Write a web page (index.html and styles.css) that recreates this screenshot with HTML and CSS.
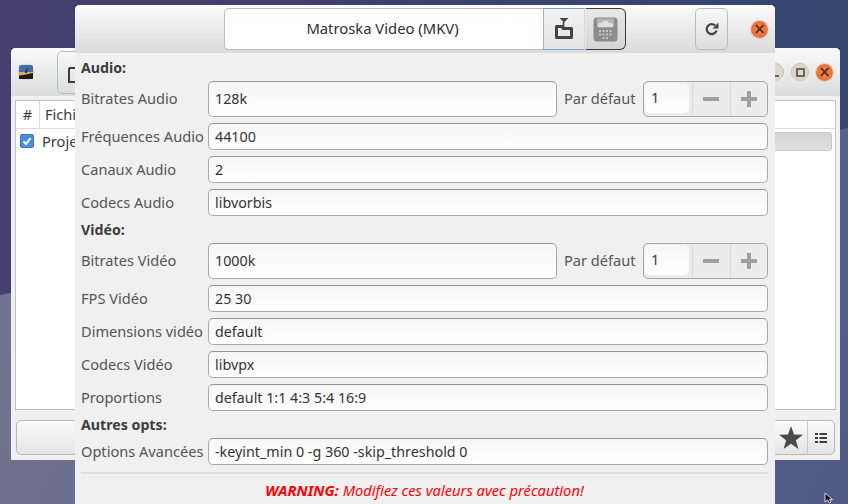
FILE: index.html
```html
<!DOCTYPE html>
<html lang="fr">
<head>
    <meta charset="UTF-8">
    <title>Matroska Video (MKV)</title>
    <link rel="stylesheet" href="styles.css">
</head>
<body>
    <div class="desktop">
        <!-- Window behind the settings dialog -->
        <div class="window back-window">
            <div class="back-header">
                <svg class="app-icon" width="18" height="18" viewBox="0 0 18 18">
                    <circle cx="9" cy="9" r="8.5" fill="#ddd8cf"/>
                    <rect x="2" y="2" width="14" height="14" rx="2" fill="#3f6fa8"/>
                    <rect x="2" y="9" width="14" height="3" fill="#e8a060"/>
                    <path d="M2 16 L2 13 L16 10 L16 16 Z" fill="#1b1b1b"/>
                    <path d="M8 10 L10 5 L11 5 L9.5 10 Z" fill="#222"/>
                </svg>
                <div class="back-tool">
                    <svg width="14" height="16" viewBox="0 0 14 16">
                        <path d="M1 1 H8 M1 1 V15 H12 V6 M11 1 V3" fill="none" stroke="#3c3c3c" stroke-width="2"/>
                    </svg>
                </div>
                <div class="back-controls">
                    <span class="wm-btn"><span class="wm-min"></span></span>
                    <span class="wm-btn"><span class="wm-max"></span></span>
                    <span class="wm-close">×</span>
                </div>
            </div>
            <div class="back-body">
                <div class="file-list">
                    <div class="list-head">
                        <span class="col-num">#</span>
                        <span class="col-name">Fichier</span>
                    </div>
                    <div class="list-row">
                        <span class="check">
                            <svg width="12" height="12" viewBox="0 0 12 12"><path d="M2.5 6.5 L5 9 L9.5 3" fill="none" stroke="#fff" stroke-width="2"/></svg>
                        </span>
                        <span>Projet</span>
                        <div class="progress"></div>
                    </div>
                </div>
                <div class="back-footer">
                    <div class="footer-main"></div>
                    <div class="footer-btn star">
                        <svg width="24" height="23" viewBox="0 0 24 23">
                            <path d="M12 0 L15 8.500 L24 8.800 L16.900 14.200 L19.400 23 L12 17.800 L4.600 23 L7.100 14.200 L0 8.800 L9 8.500 Z" fill="#4a4a4a"/>
                        </svg>
                    </div>
                    <div class="footer-btn">
                        <svg width="12" height="10" viewBox="0 0 12 10">
                            <path d="M0 0H3V2H0ZM4.500 0H12V2H4.500ZM0 4H3V6H0ZM4.500 4H12V6H4.500ZM0 8H3V10H0ZM4.500 8H12V10H4.500Z" fill="#3c3c3c"/>
                        </svg>
                    </div>
                </div>
            </div>
        </div>

        <!-- Settings dialog -->
        <div class="window dialog">
            <div class="dialog-header">
                <div class="format-group">
                    <div class="format-name">Matroska Video (MKV)</div>
                    <div class="format-btn btn-blue">
                        <svg width="20" height="24" viewBox="0 0 20 24">
                            <path d="M5.500 1H14.500L10 5.500Z" fill="#444"/>
                            <path d="M9.500 5V9" fill="none" stroke="#444" stroke-width="1.600"/>
                            <path d="M2.500 9.500H9V11.500H17.500V20.500H2.500Z" fill="none" stroke="#444" stroke-width="3" stroke-linejoin="round"/>
                        </svg>
                    </div>
                    <div class="format-btn btn-dark">
                        <svg width="25" height="25" viewBox="0 0 25 25">
                            <rect x="0.5" y="0.5" width="24" height="24" rx="3.5" fill="#8c8c8c"/>
                            <path d="M4 1.500 H21 V8 C21 10 19 11 17 10.500 H8 C6 11 4 10 4 8 Z" fill="#b5b5b5"/>
                            <path d="M5 10 C4 6 7 5 9 6 C10 2.500 15 2.500 16 6 C19 5 21 7 20 10 Z" fill="#e0e0e0"/>
                            <path d="M6 13H8V15H6ZM9.500 13H11.500V15H9.500ZM13 13H15V15H13ZM16.500 13H18.500V15H16.500ZM6 16.500H8V18.500H6ZM9.500 16.500H11.500V18.500H9.500ZM13 16.500H15V18.500H13ZM16.500 16.500H18.500V18.500H16.500ZM9.500 20H11.500V22H9.500ZM13 20H15V22H13Z" fill="#c4c4c4"/>
                        </svg>
                    </div>
                </div>
                <div class="refresh-btn">
                    <svg width="16" height="16" viewBox="0 0 16 16">
                        <path d="M12.500 9.500 A5 5 0 1 1 11 4.300" fill="none" stroke="#444" stroke-width="2.300"/>
                        <path d="M14.500 1.500 V7.500 H8.500 Z" fill="#444"/>
                    </svg>
                </div>
                <div class="dialog-close">×</div>
            </div>
            <div class="form">
                <div class="section-title title-first">Audio:</div>
                <div class="row row-tall">
                    <label class="field-label">Bitrates Audio</label>
                    <div class="entry entry-grow">128k</div>
                    <span class="default-label">Par défaut</span>
                    <div class="spin">
                        <div class="spin-value">1</div>
                        <div class="spin-btn">
                            <svg width="16" height="4" viewBox="0 0 16 4"><path d="M0 0H16V4H0Z" fill="#a0a0a0"/></svg>
                        </div>
                        <div class="spin-btn">
                            <svg width="16" height="16" viewBox="0 0 16 16"><path d="M6 0H10V6H16V10H10V16H6V10H0V6H6Z" fill="#a0a0a0"/></svg>
                        </div>
                    </div>
                </div>
                <div class="row">
                    <label class="field-label">Fréquences Audio</label>
                    <div class="entry">44100</div>
                </div>
                <div class="row">
                    <label class="field-label">Canaux Audio</label>
                    <div class="entry">2</div>
                </div>
                <div class="row">
                    <label class="field-label">Codecs Audio</label>
                    <div class="entry">libvorbis</div>
                </div>
                <div class="section-title">Vidéo:</div>
                <div class="row row-tall">
                    <label class="field-label">Bitrates Vidéo</label>
                    <div class="entry entry-grow">1000k</div>
                    <span class="default-label">Par défaut</span>
                    <div class="spin">
                        <div class="spin-value">1</div>
                        <div class="spin-btn">
                            <svg width="16" height="4" viewBox="0 0 16 4"><path d="M0 0H16V4H0Z" fill="#a0a0a0"/></svg>
                        </div>
                        <div class="spin-btn">
                            <svg width="16" height="16" viewBox="0 0 16 16"><path d="M6 0H10V6H16V10H10V16H6V10H0V6H6Z" fill="#a0a0a0"/></svg>
                        </div>
                    </div>
                </div>
                <div class="row">
                    <label class="field-label">FPS Vidéo</label>
                    <div class="entry">25 30</div>
                </div>
                <div class="row">
                    <label class="field-label">Dimensions vidéo</label>
                    <div class="entry">default</div>
                </div>
                <div class="row">
                    <label class="field-label">Codecs Vidéo</label>
                    <div class="entry">libvpx</div>
                </div>
                <div class="row">
                    <label class="field-label">Proportions</label>
                    <div class="entry">default 1:1 4:3 5:4 16:9</div>
                </div>
                <div class="section-title">Autres opts:</div>
                <div class="row">
                    <label class="field-label">Options Avancées</label>
                    <div class="entry">-keyint_min 0 -g 360 -skip_threshold 0</div>
                </div>
                <div class="separator"></div>
                <div class="warning"><b>WARNING:</b> Modifiez ces valeurs avec précaution!</div>
            </div>
        </div>

        <svg class="cursor" width="10" height="12" viewBox="0 0 10 12">
            <path d="M1 1 V10 L3.500 8 L5.500 11 L7 10 L5.500 7.500 H8.500 Z" fill="#111" stroke="#fff" stroke-width="0.800"/>
        </svg>
    </div>
</body>
</html>
```

FILE: styles.css
```css
html, body {
    margin: 0;
    padding: 0;
}
body {
    font-family: "Noto Sans", "Open Sans", sans-serif;
    font-size: 14.6px;
    color: #3c3c3c;
}
.desktop {
    position: relative;
    width: 848px;
    height: 504px;
    overflow: hidden;
    background: linear-gradient(90deg, #463e6e 0%, #3f4070 40%, #33476f 100%);
}
/* lighter lower part of the wallpaper */
.desktop::before {
    content: "";
    position: absolute;
    inset: 0;
    clip-path: polygon(0 295px, 848px 128px, 848px 504px, 0 504px);
    background: linear-gradient(120deg, #75778f 0%, #6a6c8e 40%, #505a85 100%);
}
.window {
    position: absolute;
    box-sizing: border-box;
    /* dark pixels show through the rounded header corners */
    background: linear-gradient(#111 0 6px, #f0f0f0 6px);
}

/* back window */
.back-window {
    left: 11px;
    top: 48px;
    width: 829px;
    height: 412px;
    display: flex;
    flex-direction: column;
}
.back-header {
    height: 48px;
    flex: none;
    display: flex;
    align-items: center;
    background: linear-gradient(#fafafa, #dcdcdc);
    border-radius: 4px 4px 0 0;
}
.app-icon {
    margin-left: 6px;
}
.back-tool {
    box-sizing: border-box;
    width: 60px;
    height: 43px;
    margin-left: 22px;
    padding: 15px 0 0 10px;
    border: 1px solid #b4bccb;
    border-radius: 5px;
}
.back-controls {
    margin-left: auto;
    margin-right: 7px;
    display: flex;
    gap: 7px;
    align-items: center;
}
.wm-btn {
    display: flex;
    align-items: center;
    justify-content: center;
    width: 18px;
    height: 18px;
    border-radius: 50%;
    background: #ddd8cf;
    border: 1px solid #c6c2ba;
    box-sizing: border-box;
}
.wm-min {
    width: 8px;
    height: 2px;
    background: #666;
    margin-top: 7px;
}
.wm-max {
    width: 5px;
    height: 5px;
    border: 2px solid #6e665a;
}
.wm-close, .dialog-close {
    display: flex;
    align-items: center;
    justify-content: center;
    width: 17px;
    height: 17px;
    border-radius: 50%;
    background: radial-gradient(#f58a52, #e9622c);
    color: #5a3020;
    font-family: "DejaVu Sans", sans-serif;
    font-weight: bold;
    font-size: 15px;
    line-height: 1;
    box-shadow: 0 0 0 1px #ddd2c8;
}
.back-body {
    flex: 1;
    padding: 4px 4px 5px 4px;
    display: flex;
    flex-direction: column;
    gap: 10px;
    background: #f0f0f0;
}
.file-list {
    flex: 1;
    background: #fff;
    border: 1px solid #c0c0c0;
}
.list-head {
    display: flex;
    height: 27px;
    line-height: 27px;
    border-bottom: 1px solid #dcdcdc;
}
.col-num {
    width: 23px;
    text-align: center;
    border-right: 1px solid #dcdcdc;
}
.col-name {
    padding-left: 5px;
}
.list-row {
    display: flex;
    align-items: center;
    height: 24px;
    padding-left: 4px;
    gap: 8px;
}
.check {
    display: flex;
    align-items: center;
    justify-content: center;
    width: 12px;
    height: 12px;
    border-radius: 2px;
    background: #4a90d9;
    border: 1px solid #3b78b8;
}
.progress {
    margin-left: auto;
    margin-right: 3px;
    width: 300px;
    height: 19px;
    background: linear-gradient(#d4d4d4, #e0e0e0);
    border: 1px solid #c8c8c8;
    border-radius: 3px;
    box-sizing: border-box;
}
.back-footer {
    display: flex;
    height: 33px;
    margin: 0 1px;
    border: 1px solid #b8b8b8;
    border-radius: 5px;
    background: linear-gradient(#fafafa, #e4e4e4);
}
.footer-main {
    flex: 1;
}
.footer-btn {
    width: 26px;
    display: flex;
    align-items: center;
    justify-content: center;
    border-left: 1px solid #c8c8c8;
}
.footer-btn.star {
    border-left: 0;
    width: 30px;
    padding-right: 3px;
    box-sizing: border-box;
}

/* settings dialog */
.dialog {
    left: 75px;
    top: 5px;
    width: 700px;
    height: 499px;
    display: flex;
    flex-direction: column;
}
.dialog-header {
    height: 48px;
    flex: none;
    display: flex;
    align-items: center;
    background: linear-gradient(#fbfbfb, #dadada);
    border-radius: 4px 4px 0 0;
}
.format-group {
    display: flex;
    width: 402px;
    height: 42px;
    margin-left: 149px;
    box-sizing: border-box;
    color: #2e2e2e;
}
.format-name {
    flex: 1;
    display: flex;
    align-items: center;
    justify-content: center;
    padding: 0 3px 2px 0;
    background: linear-gradient(#fdfdfd, #ffffff);
    border: 1px solid #b4bccb;
    border-right: 0;
    border-radius: 5px 0 0 5px;
    font-size: 14.8px;
}
.format-btn {
    flex: none;
    box-sizing: border-box;
    display: flex;
    align-items: center;
    justify-content: center;
    height: 42px;
}
.btn-blue {
    width: 42px;
    border: 1px solid #d8d8d8;
    border-top-color: #6ea5d8;
    border-bottom-color: #6ea5d8;
    border-left-color: #9cb4cc;
    background: linear-gradient(#f2f2f2, #e4e4e4);
}
.btn-dark {
    width: 41px;
    border: 1px solid #3c3c3c;
    border-left: 1px solid #e8e8e8;
    border-radius: 0 6px 6px 0;
    background: linear-gradient(#e8e8e8, #d4d4d4);
}
.refresh-btn {
    box-sizing: border-box;
    display: flex;
    align-items: center;
    justify-content: center;
    width: 33px;
    height: 42px;
    margin-left: 69px;
    border: 1px solid #b4bccb;
    border-radius: 5px;
}
.dialog-close {
    margin-left: 23px;
}
.form {
    flex: 1;
    display: flex;
    flex-direction: column;
    padding: 0 7px 0 6px;
    background: #f0f0f0;
}
.section-title {
    height: 21px;
    line-height: 15px;
    font-size: 14.2px;
    font-weight: bold;
}
.title-first {
    height: 28px;
    line-height: 29px;
}
.row {
    display: flex;
    align-items: center;
    height: 27px;
    margin-bottom: 6px;
}
.row-tall {
    height: 36px;
}
.row-tall .entry,
.row-tall .spin-value {
    padding-bottom: 2px;
}
.field-label,
.default-label {
    padding-bottom: 2px;
    flex: none;
    white-space: nowrap;
    color: #555;
}
.field-label {
    width: 127px;
}
.entry {
    flex: 1;
    align-self: stretch;
    display: flex;
    align-items: center;
    box-sizing: border-box;
    padding-left: 6px;
    border: 1px solid #a8a8a8;
    border-top-color: #969696;
    border-radius: 5px;
    background: linear-gradient(#f6f6f6, #ffffff);
    color: #333;
    font-size: 14.3px;
}
.default-label {
    margin-left: 7px;
    width: 79px;
}
.spin {
    flex: none;
    align-self: stretch;
    width: 125px;
    box-sizing: border-box;
    display: flex;
    border: 1px solid #a8a8a8;
    border-radius: 5px;
    background: #ececec;
}
.spin-value {
    box-sizing: border-box;
    width: 44px;
    margin: 1px 3px 3px 1px;
    padding-left: 6px;
    display: flex;
    align-items: center;
    background: linear-gradient(#f6f6f6, #ffffff);
    border-radius: 5px;
}
.spin-btn {
    flex: 1;
    display: flex;
    align-items: center;
    justify-content: center;
    border-left: 1px solid #d8d8d8;
}
.separator {
    height: 2px;
    background: #dcdcdc;
    border-bottom: 1px solid #f8f8f8;
    margin-top: 1px;
}
.warning {
    margin-top: 5px;
    text-align: center;
    font-style: italic;
    font-size: 14.7px;
    color: #f00;
}
.cursor {
    position: absolute;
    left: 824px;
    top: 492px;
}
```
